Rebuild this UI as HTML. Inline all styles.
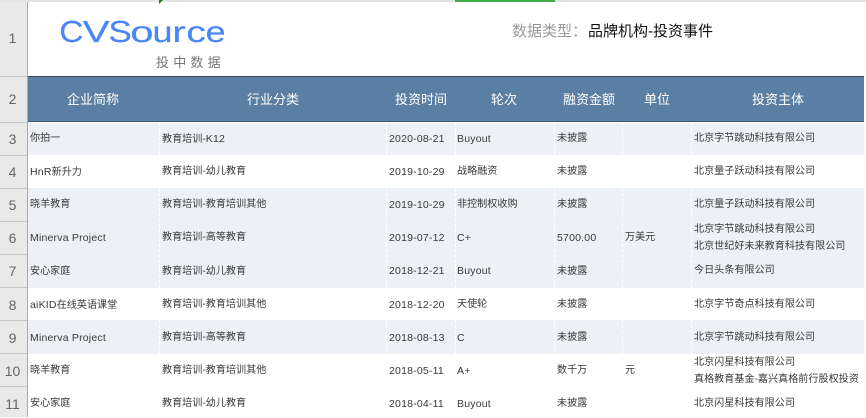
<!DOCTYPE html>
<html lang="zh">
<head>
<meta charset="utf-8">
<title>CVSource 投资事件</title>
<style>
html,body{margin:0;padding:0;background:#fff}
body{width:866px;height:418px;overflow:hidden;position:relative;font-family:"Liberation Sans","Noto Sans CJK SC",sans-serif}
div,span.a{position:absolute}
.g{left:0;width:27px;background:#e9e9e9}
.s{left:0;width:27px;height:1px;background:#c6c6c6}
.n{left:0;width:25px;text-align:center;font-size:14px;line-height:16px;color:#666}
.r{transform:translateY(1px)}
.b{left:28px;width:836px;background:#edf1f6}
.d{width:0;border-left:1px dashed #fff}
.h{top:92px;line-height:16px;font-size:13px;color:#fff;white-space:nowrap;transform:translateX(-50%)}
.t{font-size:10.1px;line-height:14px;color:#383838;white-space:nowrap;transform:translateY(1px)}
.t i{font-style:normal;font-size:10.5px;letter-spacing:.2px}
.lg{font-family:"Liberation Sans",sans-serif;fill:#4a86f7;stroke:#4a86f7;stroke-width:.15}
</style>
</head>
<body>
<div style="left:0;top:0;width:866px;height:2px;background:#e4e4e4"></div>
<div style="left:455px;top:0;width:100px;height:2px;background:#3fae49"></div>
<svg style="position:absolute;left:159px;top:0" width="4" height="4"><path d="M0 0H4L0 4Z" fill="#1f7a2c"/></svg>

<div class="g" style="top:2px;height:415px"></div>
<div style="left:27px;top:2px;width:1px;height:415px;background:#aaa"></div>
<div class="s" style="top:76px"></div>
<div class="s" style="top:122px"></div>
<div class="s" style="top:155px"></div>
<div class="s" style="top:188px"></div>
<div class="s" style="top:221px"></div>
<div class="s" style="top:254px"></div>
<div class="s" style="top:287px"></div>
<div class="s" style="top:320px"></div>
<div class="s" style="top:353px"></div>
<div class="s" style="top:386px"></div>

<div class="n" style="top:30px">1</div>
<div class="n" style="top:91px">2</div>
<div class="n r" style="top:130px">3</div>
<div class="n r" style="top:163px">4</div>
<div class="n r" style="top:196px">5</div>
<div class="n r" style="top:229px">6</div>
<div class="n r" style="top:262px">7</div>
<div class="n r" style="top:296px">8</div>
<div class="n r" style="top:329px">9</div>
<div class="n r" style="top:362px">10</div>
<div class="n r" style="top:395px">11</div>

<svg style="position:absolute;left:0;top:0" width="866" height="80" viewBox="0 0 866 80">
  <g class="lg" font-size="30.5">
    <text transform="translate(59.3 42) scale(1.1 1)">C</text>
    <text transform="translate(82.6 42) scale(1.33 1)">V</text>
    <text transform="translate(108.4 42) scale(1.15 1)">S</text>
  </g>
  <g class="lg" font-size="30">
    <text transform="translate(130.3 42) scale(1.4 1)">o</text>
    <text transform="translate(152.5 42) scale(1.2 1)">u</text>
    <text transform="translate(172.2 42) scale(1.35 1)">r</text>
    <text transform="translate(186.4 42) scale(1.3 1)">c</text>
    <text transform="translate(205.6 42) scale(1.2 1)">e</text>
  </g>
</svg>
<div style="left:156px;top:54px;font-size:13px;line-height:17px;letter-spacing:4.2px;color:#777;white-space:nowrap">投中数据</div>

<div style="left:512px;top:22px;font-size:15px;line-height:20px;color:#999;white-space:nowrap">数据类型：</div>
<div style="left:588px;top:22px;font-size:15px;line-height:20px;color:#111;white-space:nowrap">品牌机构-投资事件</div>

<div style="left:28px;top:76px;width:836px;height:46px;background:#5b7fa3"></div>
<div style="left:28px;top:76px;width:836px;height:1px;background:#3f4650"></div>
<div style="left:28px;top:121px;width:836px;height:1px;background:#46525f"></div>
<div class="h" style="left:93px">企业简称</div>
<div class="h" style="left:273px">行业分类</div>
<div class="h" style="left:421px">投资时间</div>
<div class="h" style="left:504px">轮次</div>
<div class="h" style="left:589px">融资金额</div>
<div class="h" style="left:657px">单位</div>
<div class="h" style="left:778px">投资主体</div>

<div class="b" style="top:123px;height:32px"></div>
<div class="b" style="top:188px;height:100px"></div>
<div class="b" style="top:320px;height:34px"></div>

<div class="d" style="left:159px;top:123px;height:32px"></div>
<div class="d" style="left:386px;top:123px;height:32px"></div>
<div class="d" style="left:455px;top:123px;height:32px"></div>
<div class="d" style="left:554px;top:123px;height:32px"></div>
<div class="d" style="left:622px;top:123px;height:32px"></div>
<div class="d" style="left:691px;top:123px;height:32px"></div>
<div class="d" style="left:159px;top:188px;height:100px"></div>
<div class="d" style="left:386px;top:188px;height:100px"></div>
<div class="d" style="left:455px;top:188px;height:100px"></div>
<div class="d" style="left:554px;top:188px;height:100px"></div>
<div class="d" style="left:622px;top:188px;height:100px"></div>
<div class="d" style="left:691px;top:188px;height:100px"></div>
<div class="d" style="left:159px;top:320px;height:34px"></div>
<div class="d" style="left:386px;top:320px;height:34px"></div>
<div class="d" style="left:455px;top:320px;height:34px"></div>
<div class="d" style="left:554px;top:320px;height:34px"></div>
<div class="d" style="left:622px;top:320px;height:34px"></div>
<div class="d" style="left:691px;top:320px;height:34px"></div>

<!-- Row 3 -->
<div class="t" style="left:30px;top:131px">你拍一</div>
<div class="t" style="left:162px;top:131px">教育培训-<i>K12</i></div>
<div class="t" style="left:389px;top:131px"><i>2020-08-21</i></div>
<div class="t" style="left:457px;top:131px"><i>Buyout</i></div>
<div class="t" style="left:557px;top:131px">未披露</div>
<div class="t" style="left:694px;top:131px">北京字节跳动科技有限公司</div>
<!-- Row 4 -->
<div class="t" style="left:30px;top:164px"><i>HnR</i>新升力</div>
<div class="t" style="left:162px;top:164px">教育培训-幼儿教育</div>
<div class="t" style="left:389px;top:164px"><i>2019-10-29</i></div>
<div class="t" style="left:457px;top:164px">战略融资</div>
<div class="t" style="left:557px;top:164px">未披露</div>
<div class="t" style="left:694px;top:164px">北京量子跃动科技有限公司</div>
<!-- Row 5 -->
<div class="t" style="left:30px;top:197px">晓羊教育</div>
<div class="t" style="left:162px;top:197px">教育培训-教育培训其他</div>
<div class="t" style="left:389px;top:197px"><i>2019-10-29</i></div>
<div class="t" style="left:457px;top:197px">非控制权收购</div>
<div class="t" style="left:557px;top:197px">未披露</div>
<div class="t" style="left:694px;top:197px">北京量子跃动科技有限公司</div>
<!-- Row 6 -->
<div class="t" style="left:30px;top:230px"><i>Minerva Project</i></div>
<div class="t" style="left:162px;top:230px">教育培训-高等教育</div>
<div class="t" style="left:389px;top:230px"><i>2019-07-12</i></div>
<div class="t" style="left:457px;top:230px"><i>C+</i></div>
<div class="t" style="left:557px;top:230px"><i>5700.00</i></div>
<div class="t" style="left:625px;top:230px">万美元</div>
<div class="t" style="left:694px;top:222px">北京字节跳动科技有限公司</div>
<div class="t" style="left:694px;top:239px">北京世纪好未来教育科技有限公司</div>
<!-- Row 7 -->
<div class="t" style="left:30px;top:264px">安心家庭</div>
<div class="t" style="left:162px;top:264px">教育培训-幼儿教育</div>
<div class="t" style="left:389px;top:263px"><i>2018-12-21</i></div>
<div class="t" style="left:457px;top:263px"><i>Buyout</i></div>
<div class="t" style="left:557px;top:264px">未披露</div>
<div class="t" style="left:694px;top:263px">今日头条有限公司</div>
<!-- Row 8 -->
<div class="t" style="left:30px;top:297px"><i>aiKID</i>在线英语课堂</div>
<div class="t" style="left:162px;top:297px">教育培训-教育培训其他</div>
<div class="t" style="left:389px;top:297px"><i>2018-12-20</i></div>
<div class="t" style="left:457px;top:297px">天使轮</div>
<div class="t" style="left:557px;top:297px">未披露</div>
<div class="t" style="left:694px;top:297px">北京字节奇点科技有限公司</div>
<!-- Row 9 -->
<div class="t" style="left:30px;top:330px"><i>Minerva Project</i></div>
<div class="t" style="left:162px;top:330px">教育培训-高等教育</div>
<div class="t" style="left:389px;top:330px"><i>2018-08-13</i></div>
<div class="t" style="left:457px;top:330px"><i>C</i></div>
<div class="t" style="left:557px;top:330px">未披露</div>
<div class="t" style="left:694px;top:330px">北京字节跳动科技有限公司</div>
<!-- Row 10 -->
<div class="t" style="left:30px;top:363px">晓羊教育</div>
<div class="t" style="left:162px;top:363px">教育培训-教育培训其他</div>
<div class="t" style="left:389px;top:363px"><i>2018-05-11</i></div>
<div class="t" style="left:457px;top:363px"><i>A+</i></div>
<div class="t" style="left:557px;top:363px">数千万</div>
<div class="t" style="left:625px;top:363px">元</div>
<div class="t" style="left:694px;top:355px">北京闪星科技有限公司</div>
<div class="t" style="left:694px;top:372px">真格教育基金-嘉兴真格前行股权投资</div>
<!-- Row 11 -->
<div class="t" style="left:30px;top:396px">安心家庭</div>
<div class="t" style="left:162px;top:396px">教育培训-幼儿教育</div>
<div class="t" style="left:389px;top:396px"><i>2018-04-11</i></div>
<div class="t" style="left:457px;top:396px"><i>Buyout</i></div>
<div class="t" style="left:557px;top:396px">未披露</div>
<div class="t" style="left:694px;top:396px">北京闪星科技有限公司</div>
</body>
</html>
